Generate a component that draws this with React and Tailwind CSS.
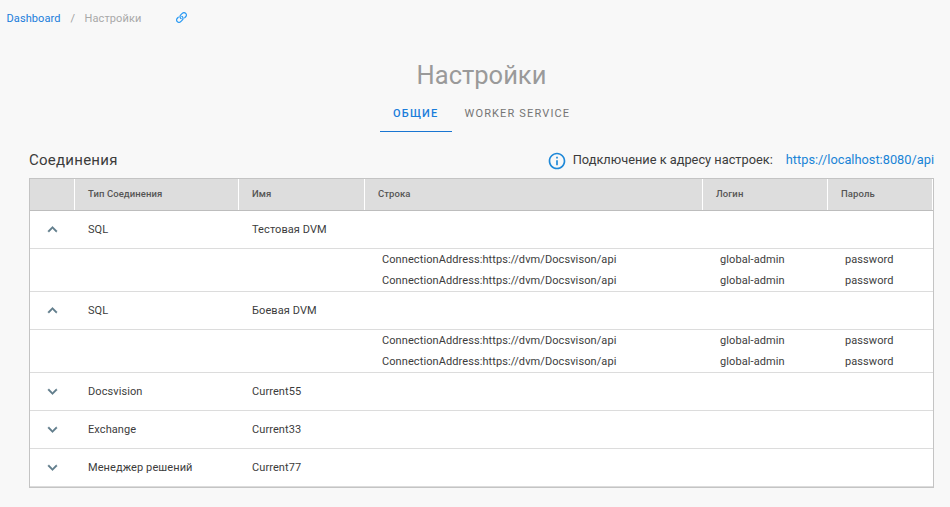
import React from "react";

const COLS = "grid grid-cols-[45px_164px_126px_338px_125px_105px]";
const HEADERS = ["", "Тип Соединения", "Имя", "Строка", "Логин", "Пароль"];

const detail = {
  address: "ConnectionAddress:https://dvm/Docsvison/api",
  login: "global-admin",
  password: "password",
};

const CONNECTIONS = [
  { type: "SQL", name: "Тестовая DVM", details: [detail, detail] },
  { type: "SQL", name: "Боевая DVM", details: [detail, detail] },
  { type: "Docsvision", name: "Current55" },
  { type: "Exchange", name: "Current33" },
  { type: "Менеджер решений", name: "Current77" },
];

function Chevron({ up }) {
  return up ? (
    <svg viewBox="0 0 24 24" className="mb-px h-[19px] w-[19px]" fill="#607d8b" stroke="#607d8b" strokeWidth="0.5">
      <path d="M7.41 15.41 12 10.83l4.59 4.58L18 14l-6-6-6 6z" />
    </svg>
  ) : (
    <svg viewBox="0 0 24 24" className="h-[19px] w-[19px]" fill="#607d8b" stroke="#607d8b" strokeWidth="0.5">
      <path d="M7.41 8.59 12 13.17l4.59-4.58L18 10l-6 6-6-6z" />
    </svg>
  );
}

function LinkIcon() {
  return (
    <svg viewBox="0 0 512 512" className="mb-[2px] h-[11px] w-[11px]" fill="#2196f3">
      <path d="M314.222 197.78c51.091 51.091 54.377 132.287 9.75 187.16-6.242 7.73-2.784 3.865-84.94 86.02-54.696 54.696-143.266 54.745-197.99 0-54.711-54.69-54.734-143.255 0-197.99 32.773-32.773 51.835-51.899 63.409-63.457 7.463-7.452 20.331-2.354 20.486 8.192a173.31 173.31 0 0 0 4.746 37.828c.966 4.029-.272 8.269-3.202 11.198L80.632 312.57c-32.755 32.775-32.887 85.892 0 118.8 32.775 32.755 85.892 32.887 118.8 0l75.19-75.2c32.718-32.725 32.777-86.013 0-118.79a83.722 83.722 0 0 0-22.814-16.229c-4.623-2.233-7.182-7.25-6.561-12.346 1.356-11.122 6.296-21.885 14.815-30.405l4.375-4.375c3.625-3.626 9.177-4.594 13.76-2.294 12.999 6.524 25.187 15.211 36.025 26.049zM470.958 41.04c-54.724-54.745-143.294-54.696-197.99 0-82.156 82.156-78.698 78.29-84.94 86.02-44.627 54.873-41.341 136.069 9.75 187.16 10.838 10.838 23.026 19.525 36.025 26.049 4.582 2.3 10.134 1.331 13.76-2.294l4.375-4.375c8.52-8.519 13.459-19.283 14.815-30.405.621-5.096-1.938-10.113-6.561-12.346a83.706 83.706 0 0 1-22.814-16.229c-32.777-32.777-32.718-86.065 0-118.79l75.19-75.2c32.908-32.887 86.025-32.755 118.8 0 32.887 32.908 32.755 86.025 0 118.8l-45.848 45.84c-2.93 2.929-4.168 7.169-3.202 11.198a173.31 173.31 0 0 1 4.746 37.828c.155 10.546 13.023 15.644 20.486 8.192 11.574-11.558 30.636-30.684 63.409-63.457 54.733-54.735 54.71-143.3-.001-197.991z" />
    </svg>
  );
}

function InfoIcon() {
  return (
    <svg viewBox="0 0 24 24" className="mt-[2px] h-5 w-5" fill="#1e88d8">
      <path d="M11 7h2v2h-2zm0 4h2v6h-2zm1-9C6.48 2 2 6.48 2 12s4.48 10 10 10 10-4.48 10-10S17.52 2 12 2zm0 18c-4.41 0-8-3.59-8-8s3.59-8 8-8 8 3.59 8 8-3.59 8-8 8z" />
    </svg>
  );
}

function Connection({ item }) {
  return (
    <>
      <div className={`${COLS} h-[38px] items-center border-b border-[#dcdcdc]`}>
        <span className="flex justify-center">
          <Chevron up={Boolean(item.details)} />
        </span>
        <span className="pl-[13px] pt-[2px]">{item.type}</span>
        <span className="pl-[13px] pt-[2px]">{item.name}</span>
      </div>
      {item.details && (
        <div className="h-[43px] border-b border-[#dcdcdc] pt-px">
          {item.details.map((d, i) => (
            <div key={i} className={`${COLS} h-[21px] items-center`}>
              <span className="col-start-4 pl-[17px]">{d.address}</span>
              <span className="pl-[17px]">{d.login}</span>
              <span className="pl-[17px]">{d.password}</span>
            </div>
          ))}
        </div>
      )}
    </>
  );
}

export default function App() {
  return (
    <div className="h-[507px] w-[950px] overflow-hidden whitespace-nowrap bg-[#f8f8f8] font-['Roboto',sans-serif] text-[#3c3c3c]">
      <nav className="flex h-9 items-center pl-[6.5px] text-[11px] tracking-[0.1px]">
        <a className="w-[64px] pt-[2px] text-[#1a7ddb]">Dashboard</a>
        <span className="w-[14px] pt-[2px] text-[#a0a0a0]">/</span>
        <span className="w-[91.5px] pt-[2px] text-[#a8a8a8]">Настройки</span>
        <LinkIcon />
      </nav>

      <h1 className="mt-[22px] pl-[13px] text-center text-[25.5px] leading-[34px] text-[#9a9a9a]">Настройки</h1>

      <div className="mt-[4px] flex h-9 pl-[380px] text-[11px] uppercase">
        <div className="flex w-[72px] items-center border-b border-[#1976d2] pl-[13px] pt-[2px] font-medium tracking-[1.2px] text-[#1a7ddb]">
          Общие
        </div>
        <div className="flex items-center border-b border-transparent pl-[12.5px] pt-[2px] tracking-[1.15px] text-[#757575]">
          Worker Service
        </div>
      </div>

      <div className="mt-[12px] flex h-[32px] items-center justify-between pl-[29px] pr-[16px]">
        <h2 className="text-[15px] tracking-[0.25px]">Соединения</h2>
        <div className="flex items-center text-[12.8px]">
          <InfoIcon />
          <span className="ml-[6px] mr-[13px]">Подключение к адресу настроек:</span>
          <a className="text-[#1a84d6]">https://localhost:8080/api</a>
        </div>
      </div>

      <div className="mt-[2px] ml-[29px] w-[905px] border border-[#c4c4c4] bg-white text-[11px] tracking-[0.09px]">
        <div className={`${COLS} h-[32px] border-b border-[#bdbdbd] bg-[#dddddd] text-[9.5px] font-medium text-[#555555]`}>
          {HEADERS.map((title, i) => (
            <div key={i} className="flex items-center border-r border-white pl-[13px]">{title}</div>
          ))}
        </div>
        {CONNECTIONS.map((item, i) => (
          <Connection key={i} item={item} />
        ))}
      </div>
    </div>
  );
}
